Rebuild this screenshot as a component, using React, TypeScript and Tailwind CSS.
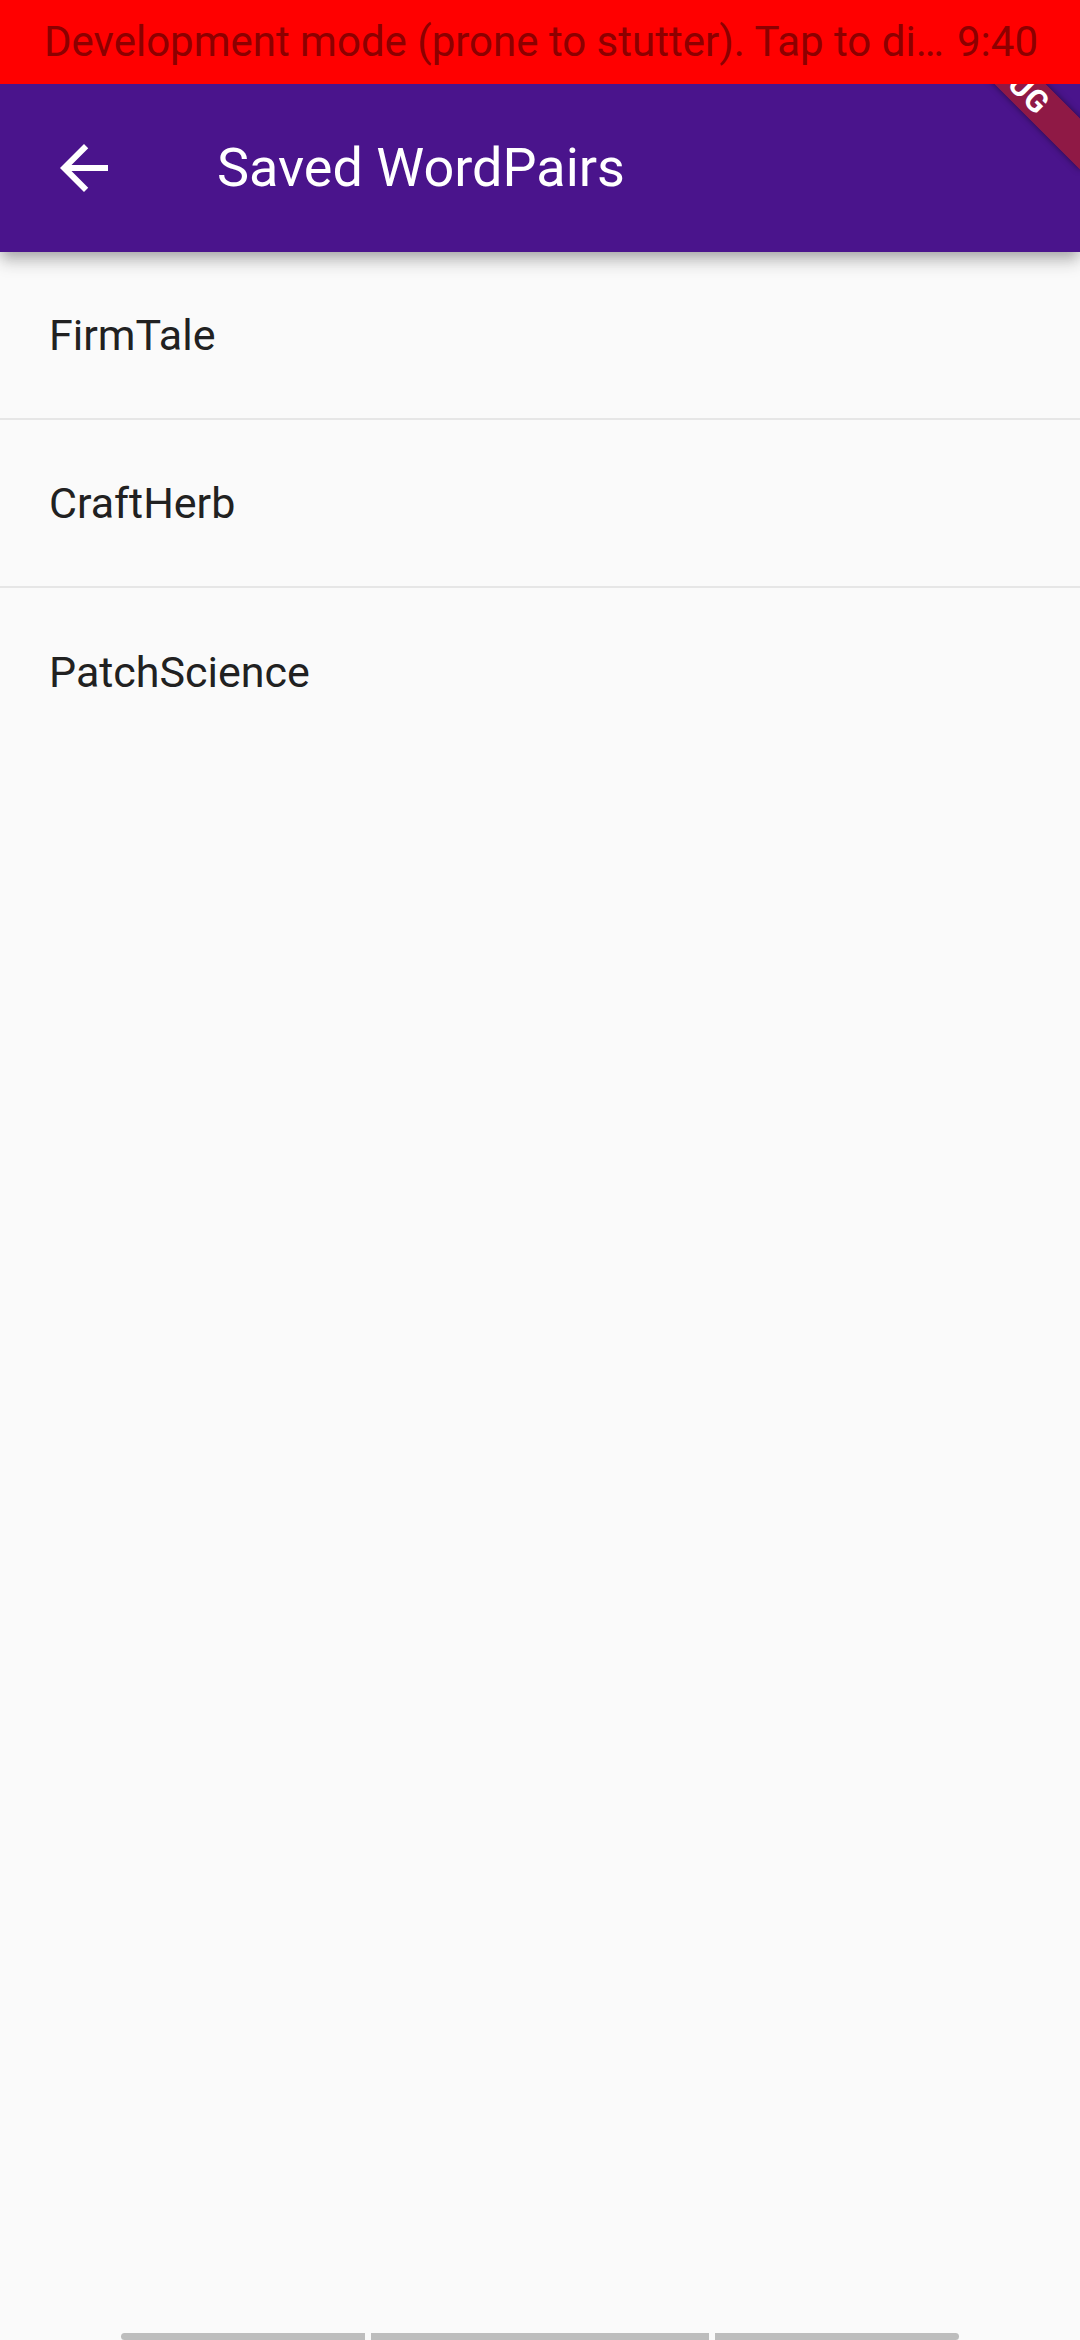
const pairs = ["FirmTale", "CraftHerb", "PatchScience"];

const App = () => {
  return (
    <div className="relative w-[1080px] h-[2340px] overflow-hidden bg-[#fafafa] flex flex-col font-['Roboto',sans-serif]">
      {/* status bar */}
      <div className="relative z-20 h-[84px] shrink-0 bg-[#ff0000] flex items-center justify-between pl-[44px] pr-[42px] text-[42px] text-[#8c0000] whitespace-nowrap">
        <span className="leading-none">Development mode (prone to stutter). Tap to di…</span>
        <span className="leading-none">9:40</span>
      </div>

      {/* app bar */}
      <div className="relative z-10 h-[168px] shrink-0 bg-[#4a148c] flex items-center shadow-[0_6px_12px_-3px_rgba(0,0,0,0.2),0_12px_15px_0_rgba(0,0,0,0.12),0_3px_20px_0_rgba(0,0,0,0.1)]">
        <div className="w-[72px] h-[72px] ml-[48px] flex items-center justify-center">
          <svg width="72" height="72" viewBox="0 0 24 24" fill="white">
            <path d="M20 11H7.83l5.59-5.59L12 4l-8 8 8 8 1.41-1.41L7.83 13H20v-2z" />
          </svg>
        </div>
        <span className="ml-[97px] text-white text-[54px] leading-none">Saved WordPairs</span>
      </div>

      {/* debug banner */}
      <div className="absolute z-[15] left-[888px] top-[54px] w-[240px] h-[36px] rotate-45 bg-[#b71c1c]/[0.63] shadow-[0_0_6px_rgba(0,0,0,0.5)] flex items-center justify-center">
        <span className="text-white font-bold text-[31px] leading-none tracking-[1px]">DEBUG</span>
      </div>

      {/* list */}
      <div className="flex flex-col">
        {pairs.map((p, i) => (
          <div
            key={p}
            className={
              i < pairs.length - 1
                ? "h-[168px] flex items-center pl-[49px] border-b-2 border-[#e6e6e6]"
                : "h-[168px] flex items-center pl-[49px]"
            }
          >
            <span className="text-[43px] text-[#212121] leading-none">{p}</span>
          </div>
        ))}
      </div>

      <div className="flex-1" />

      {/* nav hint bars */}
      <div className="h-[7px] flex pl-[121px] gap-[6px]">
        <div className="w-[244px] h-[7px] bg-[#bdbdbd] rounded-tl-[4px] rounded-bl-[4px]" />
        <div className="w-[338px] h-[7px] bg-[#bdbdbd]" />
        <div className="w-[244px] h-[7px] bg-[#bdbdbd] rounded-tr-[4px] rounded-br-[4px]" />
      </div>
    </div>
  );
};

export default App;
